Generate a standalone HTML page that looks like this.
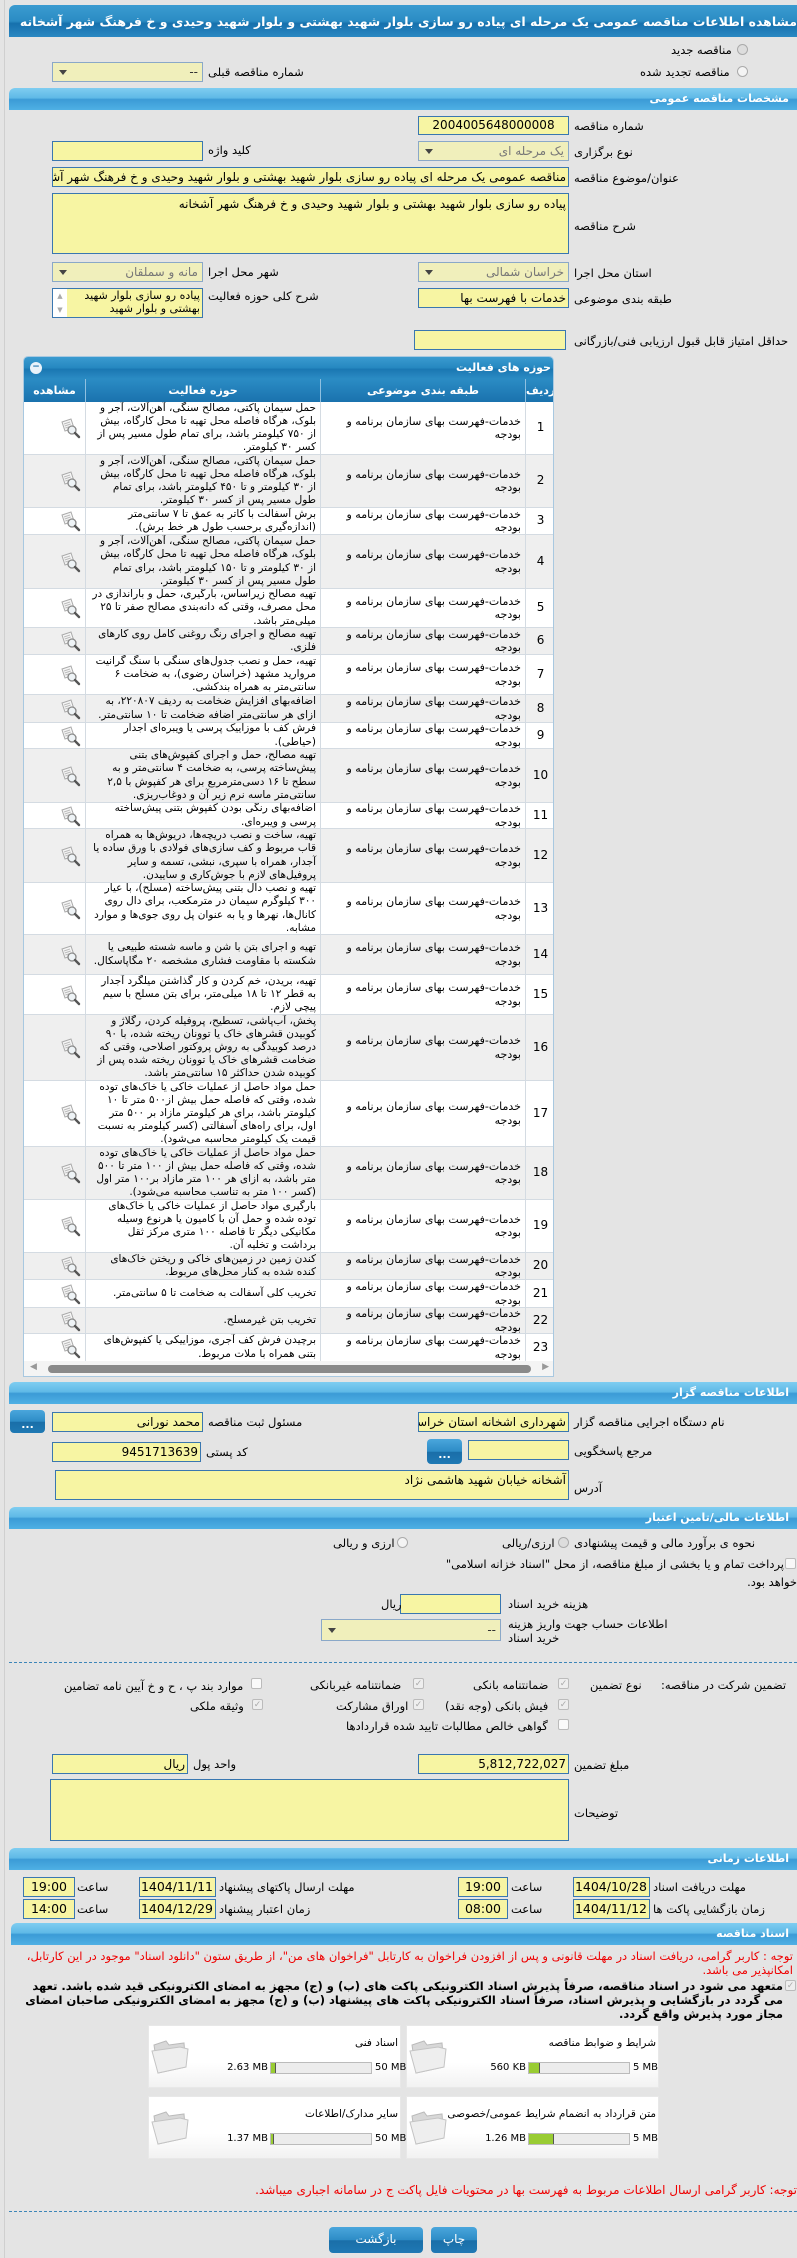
<!DOCTYPE html>
<html><head><meta charset="utf-8">
<style>
*{box-sizing:border-box}
body{margin:0;width:797px;height:2258px;background:#e4e4e4;font-family:"DejaVu Sans","Liberation Sans",sans-serif;font-size:11px;color:#000;position:relative;overflow:hidden}
.a{position:absolute;white-space:nowrap;direction:rtl}
.lbl{position:absolute;white-space:nowrap;direction:rtl;font-size:11.5px;line-height:14px}
.in{position:absolute;background:#f7f5a3;border:1px solid #3a77b0;direction:rtl;text-align:right;font-size:12px;padding:0 2px;overflow:hidden;white-space:nowrap}
.sel{position:absolute;background:#f0efbb;border:1px solid #8aa8c8;direction:rtl;text-align:right;font-size:12px;padding:0 4px;color:#777;overflow:hidden;white-space:nowrap}
.sel:after{content:"";position:absolute;left:6px;top:50%;margin-top:-2px;border-left:4px solid transparent;border-right:4px solid transparent;border-top:5px solid #444}
.sec{position:absolute;left:9px;width:788px;height:22px;border-radius:6px 0 0 0;background:linear-gradient(#7fcdf1 0%,#5fb9e7 45%,#3b9bd6 52%,#4fb0e4 100%);color:#fff;font-weight:bold;font-size:11px;direction:rtl;text-align:right;padding:4px 8px 0 0}
.btn{position:absolute;border-radius:4px;background:linear-gradient(#4aa6dc 0%,#2d8cc6 50%,#1a6ea8 52%,#1f79b4 100%);color:#fff;text-align:center;font-weight:bold;font-size:11px}
.rad{position:absolute;width:11px;height:11px;border-radius:50%;border:1px solid #aaa;background:#f4f4f4}
.chk{position:absolute;width:11px;height:11px;border:1px solid #bbb;background:#eee;border-radius:2px;color:#aaa;font-size:9px;line-height:10px;text-align:center}
.row{position:absolute;left:0;width:531px;border-bottom:1px solid #d4dbe2}
.cell{position:absolute;top:0;bottom:0;border-left:1px solid #d4dbe2;direction:rtl;text-align:right;display:flex;align-items:center;justify-content:flex-start;overflow:hidden;line-height:13.2px}
.hc{position:absolute;top:22px;height:23px;color:#fff;font-weight:bold;text-align:center;line-height:23px;border-left:1px solid #8fc0e0;font-size:11px}
.red{position:absolute;color:#e00;direction:rtl;text-align:right;font-size:11.5px;line-height:14px}
.pan{position:absolute;background:linear-gradient(#fff 60%,#f2f2f2);border:1px solid #e8e8e8}
.bar{position:absolute;height:12px;background:#ececec;border:1px solid #bbb}
.bar i{position:absolute;left:0;top:0;bottom:0;background:#9c3;border-right:1px solid #555}
</style></head><body>
<div style="position:absolute;left:4px;top:0;width:1px;height:2258px;background:#cfcfcf"></div>

<div style="position:absolute;left:9px;top:5px;width:788px;height:32px;border-radius:6px 0 0 0;background:linear-gradient(#3a9bd0 0%,#2b8cc4 50%,#1670ad 58%,#2a88c2 100%);overflow:hidden"><div style="position:absolute;right:0;top:9px;color:#fff;font-weight:bold;font-size:12.5px;direction:rtl;white-space:nowrap">مشاهده اطلاعات مناقصه عمومی یک مرحله ای پیاده رو سازی بلوار شهید بهشتی و بلوار شهید وحیدی و خ فرهنگ شهر آشخانه</div></div>

<div class="rad" style="left:737px;top:44px;background:#ddd"></div><div class="lbl" style="left:671px;top:43px">مناقصه جدید</div>
<div class="rad" style="left:737px;top:66px"></div><div class="lbl" style="left:640px;top:65px">مناقصه تجدید شده</div>
<div class="sel" style="left:52px;top:62px;width:151px;height:20px;color:#333;line-height:18px">--</div>
<div class="lbl" style="left:208px;top:65px">شماره مناقصه قبلی</div>

<div class="sec" style="top:88px">مشخصات مناقصه عمومی</div>
<div class="in" style="left:418px;top:116px;width:151px;height:19px;text-align:center;line-height:17px">2004005648000008</div>
<div class="lbl" style="left:574px;top:119px">شماره مناقصه</div>
<div class="sel" style="left:418px;top:141px;width:151px;height:20px;line-height:18px">یک مرحله ای</div>
<div class="lbl" style="left:574px;top:145px">نوع برگزاری</div>
<div class="in" style="left:52px;top:141px;width:151px;height:20px"></div>
<div class="lbl" style="left:208px;top:143px">کلید واژه</div>
<div class="in" style="left:52px;top:167px;width:517px;height:20px;line-height:18px">مناقصه عمومی یک مرحله ای پیاده رو سازی بلوار شهید بهشتی و بلوار شهید وحیدی و خ فرهنگ شهر آشخانه</div>
<div class="lbl" style="left:574px;top:171px">عنوان/موضوع مناقصه</div>
<div class="in" style="left:52px;top:193px;width:517px;height:61px;line-height:16px;padding-top:2px">پیاده رو سازی بلوار شهید بهشتی و بلوار شهید وحیدی و خ فرهنگ شهر آشخانه</div>
<div class="lbl" style="left:574px;top:219px">شرح مناقصه</div>

<div class="sel" style="left:418px;top:262px;width:151px;height:20px;line-height:18px">خراسان شمالی</div>
<div class="lbl" style="left:574px;top:266px">استان محل اجرا</div>
<div class="sel" style="left:52px;top:262px;width:151px;height:20px;line-height:18px">مانه و سملقان</div>
<div class="lbl" style="left:208px;top:265px">شهر محل اجرا</div>
<div class="in" style="left:418px;top:288px;width:151px;height:20px;line-height:18px">خدمات با فهرست بها</div>
<div class="lbl" style="left:574px;top:292px">طبقه بندی موضوعی</div>
<div class="in" style="left:52px;top:288px;width:151px;height:30px;line-height:13px;font-size:11px;padding-left:16px;white-space:normal">پیاده رو سازی بلوار شهید بهشتی و بلوار شهید<div style="position:absolute;left:0;top:0;width:14px;height:28px;background:#fff;color:#aaa;font-size:7px;text-align:center;line-height:14px">▲<br>▼</div></div>
<div class="lbl" style="left:208px;top:289px">شرح کلی حوزه فعالیت</div>
<div class="in" style="left:414px;top:330px;width:152px;height:20px"></div>
<div class="lbl" style="left:574px;top:334px">حداقل امتیاز قابل قبول ارزیابی فنی/بازرگانی</div>

<!-- table -->
<div id="tbl" style="position:absolute;left:23px;top:356px;width:531px;height:1021px;background:#fff;border:1px solid #a8c8e0;border-radius:5px 5px 0 0;overflow:hidden">
<div style="position:absolute;left:0;top:0;width:531px;height:22px;background:linear-gradient(#3a9bd0,#2587c0 50%,#1a77b2 55%,#2b8cc4);color:#fff;font-weight:bold;font-size:11px;direction:rtl;text-align:right;padding:4px 4px 0 0">حوزه های فعالیت<div style="position:absolute;left:6px;top:5px;width:12px;height:12px;border-radius:50%;background:#e8f2fa;color:#1a70aa;font-size:9px;line-height:11px;text-align:center">−</div></div>
<div style="position:absolute;left:0;top:22px;width:531px;height:23px;background:linear-gradient(#2b8cc4,#1a72ae)"></div>
<div class="hc" style="left:501px;width:30px;border-left:1px solid #8fc0e0">ردیف</div>
<div class="hc" style="left:296px;width:205px">طبقه بندی موضوعی</div>
<div class="hc" style="left:61px;width:235px">حوزه فعالیت</div>
<div class="hc" style="left:0;width:61px;border-left:none">مشاهده</div>
<div id="rows"></div>
<div style="position:absolute;left:0;top:1004px;width:531px;height:15px;background:#f4f4f4"><div style="position:absolute;left:24px;right:24px;top:4px;height:8px;border-radius:4px;background:#8a8a8a"></div><div class="a" style="left:6px;top:1px;color:#999;font-size:9px">◀</div><div class="a" style="right:6px;top:1px;color:#999;font-size:9px">▶</div></div>
</div>

<div class="sec" style="top:1382px">اطلاعات مناقصه گزار</div>
<div class="in" style="left:418px;top:1412px;width:151px;height:20px;line-height:18px">شهرداری اشخانه استان خراسان</div>
<div class="lbl" style="left:574px;top:1415px">نام دستگاه اجرایی مناقصه گزار</div>
<div class="in" style="left:52px;top:1412px;width:151px;height:20px;line-height:18px">محمد نورانی</div>
<div class="lbl" style="left:208px;top:1415px">مسئول ثبت مناقصه</div>
<div class="btn" style="left:10px;top:1410px;width:35px;height:23px;line-height:30px">...</div>
<div class="in" style="left:468px;top:1440px;width:101px;height:20px"></div>
<div class="btn" style="left:427px;top:1439px;width:35px;height:25px;line-height:32px">...</div>
<div class="lbl" style="left:574px;top:1444px">مرجع پاسخگویی</div>
<div class="in" style="left:52px;top:1442px;width:149px;height:20px;line-height:18px">9451713639</div>
<div class="lbl" style="left:206px;top:1445px">کد پستی</div>
<div class="in" style="left:55px;top:1470px;width:514px;height:30px;line-height:18px">آشخانه خیابان شهید هاشمی نژاد</div>
<div class="lbl" style="left:574px;top:1481px">آدرس</div>

<div class="sec" style="top:1507px">اطلاعات مالی/تامین اعتبار</div>
<div class="lbl" style="left:574px;top:1536px">نحوه ی برآورد مالی و قیمت پیشنهادی</div>
<div class="rad" style="left:558px;top:1537px;background:#ddd"></div><div class="lbl" style="left:502px;top:1536px">ارزی/ریالی</div>
<div class="rad" style="left:397px;top:1537px"></div><div class="lbl" style="left:333px;top:1536px">ارزی و ریالی</div>
<div class="chk" style="left:785px;top:1558px;background:#f8f8f8"></div>
<div class="lbl" style="right:13px;top:1557px">پرداخت تمام و یا بخشی از مبلغ مناقصه، از محل "اسناد خزانه اسلامی"</div>
<div class="lbl" style="right:0px;top:1575px">خواهد بود.</div>
<div class="in" style="left:400px;top:1594px;width:101px;height:20px"></div>
<div class="lbl" style="left:381px;top:1597px">ریال</div>
<div class="lbl" style="left:508px;top:1597px">هزینه خرید اسناد</div>
<div class="sel" style="left:321px;top:1619px;width:180px;height:22px;color:#333;line-height:20px">--</div>
<div class="lbl" style="left:508px;top:1617px">اطلاعات حساب جهت واریز هزینه</div>
<div class="lbl" style="left:508px;top:1631px">خرید اسناد</div>
<div style="position:absolute;left:9px;top:1662px;width:788px;border-top:1px dashed #3d86b8"></div>

<div class="lbl" style="left:661px;top:1678px">تضمین شرکت در مناقصه:</div>
<div class="lbl" style="left:590px;top:1678px">نوع تضمین</div>
<div class="chk" style="left:558px;top:1678px">✓</div><div class="lbl" style="left:473px;top:1678px">ضمانتنامه بانکی</div>
<div class="chk" style="left:413px;top:1678px">✓</div><div class="lbl" style="left:310px;top:1678px">ضمانتنامه غیربانکی</div>
<div class="chk" style="left:251px;top:1678px;background:#fafafa"></div><div class="lbl" style="left:64px;top:1679px">موارد بند پ ، ح و خ آیین نامه تضامین</div>
<div class="chk" style="left:558px;top:1699px">✓</div><div class="lbl" style="left:445px;top:1699px">فیش بانکی (وجه نقد)</div>
<div class="chk" style="left:413px;top:1699px">✓</div><div class="lbl" style="left:336px;top:1699px">اوراق مشارکت</div>
<div class="chk" style="left:252px;top:1699px">✓</div><div class="lbl" style="left:190px;top:1699px">وثیقه ملکی</div>
<div class="chk" style="left:558px;top:1719px;background:#fafafa"></div><div class="lbl" style="left:346px;top:1719px">گواهی خالص مطالبات تایید شده قراردادها</div>

<div class="in" style="left:418px;top:1754px;width:151px;height:20px;line-height:18px">5,812,722,027</div>
<div class="lbl" style="left:574px;top:1758px">مبلغ تضمین</div>
<div class="in" style="left:52px;top:1754px;width:136px;height:20px;line-height:18px">ریال</div>
<div class="lbl" style="left:193px;top:1757px">واحد پول</div>
<div class="in" style="left:50px;top:1779px;width:519px;height:62px"></div>
<div class="lbl" style="left:574px;top:1806px">توضیحات</div>

<div class="sec" style="top:1848px">اطلاعات زمانی</div>
<div class="lbl" style="left:653px;top:1880px">مهلت دریافت اسناد</div>
<div class="in" style="left:573px;top:1877px;width:77px;height:20px;line-height:18px;font-size:12.5px;text-align:center">1404/10/28</div>
<div class="lbl" style="left:511px;top:1880px">ساعت</div>
<div class="in" style="left:458px;top:1877px;width:50px;height:20px;line-height:18px;text-align:center;font-size:12.5px">19:00</div>
<div class="lbl" style="left:219px;top:1880px">مهلت ارسال پاکتهای پیشنهاد</div>
<div class="in" style="left:139px;top:1877px;width:77px;height:20px;line-height:18px;font-size:12.5px;text-align:center">1404/11/11</div>
<div class="lbl" style="left:77px;top:1880px">ساعت</div>
<div class="in" style="left:23px;top:1877px;width:52px;height:20px;line-height:18px;text-align:center;font-size:12.5px">19:00</div>
<div class="lbl" style="left:653px;top:1902px">زمان بازگشایی پاکت ها</div>
<div class="in" style="left:573px;top:1899px;width:77px;height:20px;line-height:18px;font-size:12.5px;text-align:center">1404/11/12</div>
<div class="lbl" style="left:511px;top:1902px">ساعت</div>
<div class="in" style="left:458px;top:1899px;width:50px;height:20px;line-height:18px;text-align:center;font-size:12.5px">08:00</div>
<div class="lbl" style="left:219px;top:1902px">زمان اعتبار پیشنهاد</div>
<div class="in" style="left:139px;top:1899px;width:77px;height:20px;line-height:18px;font-size:12.5px;text-align:center">1404/12/29</div>
<div class="lbl" style="left:77px;top:1902px">ساعت</div>
<div class="in" style="left:23px;top:1899px;width:52px;height:20px;line-height:18px;text-align:center;font-size:12.5px">14:00</div>

<div class="sec" style="top:1923px;left:11px;width:786px">اسناد مناقصه</div>
<div class="red" style="left:20px;right:4px;top:1949px">توجه : کاربر گرامی، دریافت اسناد در مهلت قانونی و پس از افزودن فراخوان به کارتابل "فراخوان های من"، از طریق ستون "دانلود اسناد" موجود در این کارتابل، امکانپذیر می باشد.</div>
<div class="chk" style="left:785px;top:1980px">✓</div>
<div class="a" style="left:10px;right:14px;top:1979px;white-space:normal;font-weight:bold;font-size:11.5px;line-height:14px;text-align:right">متعهد می شود در اسناد مناقصه، صرفاً پذیرش اسناد الکترونیکی پاکت های (ب) و (ج) مجهز به امضای الکترونیکی قید شده باشد. تعهد می گردد در بازگشایی و پذیرش اسناد، صرفاً اسناد الکترونیکی پاکت های پیشنهاد (ب) و (ج) مجهز به امضای الکترونیکی صاحبان امضای مجاز مورد پذیرش واقع گردد.</div>

<div id="panels"></div>

<div class="red" style="right:0;top:2183px;font-size:12px;white-space:nowrap">توجه: کاربر گرامی ارسال اطلاعات مربوط به فهرست بها در محتویات فایل پاکت ج در سامانه اجباری میباشد.</div>
<div style="position:absolute;left:9px;top:2211px;width:788px;border-top:1px dashed #3d86b8"></div>
<div class="btn" style="left:329px;top:2227px;width:94px;height:26px;line-height:24px;font-weight:normal;font-size:12px">بازگشت</div>
<div class="btn" style="left:431px;top:2227px;width:46px;height:26px;line-height:24px;font-weight:normal;font-size:12px">چاپ</div>

<script>
var rows=[
[53,"حمل سیمان پاکتی، مصالح سنگی، آهن‌آلات، آجر و بلوک، هرگاه فاصله محل تهیه تا محل کارگاه، بیش از ۷۵۰ کیلومتر باشد، برای تمام طول مسیر پس از کسر ۳۰ کیلومتر."],
[53,"حمل سیمان پاکتی، مصالح سنگی، آهن‌آلات، آجر و بلوک، هرگاه فاصله محل تهیه تا محل کارگاه، بیش از ۳۰ کیلومتر و تا ۴۵۰ کیلومتر باشد، برای تمام طول مسیر پس از کسر ۳۰ کیلومتر."],
[27,"برش آسفالت با کاتر به عمق تا ۷ سانتی‌متر (اندازه‌گیری برحسب طول هر خط برش)."],
[54,"حمل سیمان پاکتی، مصالح سنگی، آهن‌آلات، آجر و بلوک، هرگاه فاصله محل تهیه تا محل کارگاه، بیش از ۳۰ کیلومتر و تا ۱۵۰ کیلومتر باشد، برای تمام طول مسیر پس از کسر ۳۰ کیلومتر."],
[39,"تهیه مصالح زیراساس، بارگیری، حمل و باراندازی در محل مصرف، وقتی که دانه‌بندی مصالح صفر تا ۲۵ میلی‌متر باشد."],
[27,"تهیه مصالح و اجرای رنگ روغنی کامل روی کارهای فلزی."],
[40,"تهیه، حمل و نصب جدول‌های سنگی با سنگ گرانیت مروارید مشهد (خراسان رضوی)، به ضخامت ۶ سانتی‌متر به همراه بندکشی."],
[28,"اضافه‌بهای افزایش ضخامت به ردیف ۲۲۰۸۰۷، به ازای هر سانتی‌متر اضافه ضخامت تا ۱۰ سانتی‌متر."],
[26,"فرش کف با موزاییک پرسی یا ویبره‌ای آجدار (حیاطی)."],
[54,"تهیه مصالح، حمل و اجرای کفپوش‌های بتنی پیش‌ساخته پرسی، به ضخامت ۴ سانتی‌متر و به سطح تا ۱۶ دسی‌مترمربع برای هر کفپوش با ۲,۵ سانتی‌متر ماسه نرم زیر آن و دوغاب‌ریزی."],
[26,"اضافه‌بهای رنگی بودن کفپوش بتنی پیش‌ساخته پرسی و ویبره‌ای."],
[54,"تهیه، ساخت و نصب دریچه‌ها، دریوش‌ها به همراه قاب مربوط و کف سازی‌های فولادی با ورق ساده یا آجدار، همراه با سپری، نبشی، تسمه و سایر پروفیل‌های لازم با جوش‌کاری و ساییدن."],
[52,"تهیه و نصب دال بتنی پیش‌ساخته (مسلح)، با عیار ۳۰۰ کیلوگرم سیمان در مترمکعب، برای دال روی کانال‌ها، نهرها و یا به عنوان پل روی جوی‌ها و موارد مشابه."],
[40,"تهیه و اجرای بتن با شن و ماسه شسته طبیعی یا شکسته با مقاومت فشاری مشخصه ۲۰ مگاپاسکال."],
[40,"تهیه، بریدن، خم کردن و کار گذاشتن میلگرد آجدار به قطر ۱۲ تا ۱۸ میلی‌متر، برای بتن مسلح با سیم پیچی لازم."],
[66,"پخش، آب‌پاشی، تسطیح، پروفیله کردن، رگلاژ و کوبیدن قشرهای خاک یا توونان ریخته شده، با ۹۰ درصد کوبیدگی به روش پروکتور اصلاحی، وقتی که ضخامت قشرهای خاک یا توونان ریخته شده پس از کوبیده شدن حداکثر ۱۵ سانتی‌متر باشد."],
[66,"حمل مواد حاصل از عملیات خاکی یا خاک‌های توده شده، وقتی که فاصله حمل بیش از۵۰۰ متر تا ۱۰ کیلومتر باشد، برای هر کیلومتر مازاد بر ۵۰۰ متر اول، برای راه‌های آسفالتی (کسر کیلومتر به نسبت قیمت یک کیلومتر محاسبه می‌شود)."],
[53,"حمل مواد حاصل از عملیات خاکی یا خاک‌های توده شده، وقتی که فاصله حمل بیش از ۱۰۰ متر تا ۵۰۰ متر باشد، به ازای هر ۱۰۰ متر مازاد بر۱۰۰ متر اول (کسر ۱۰۰ متر به تناسب محاسبه می‌شود)."],
[53,"بارگیری مواد حاصل از عملیات خاکی یا خاک‌های توده شده و حمل آن با کامیون یا هرنوع وسیله مکانیکی دیگر تا فاصله ۱۰۰ متری مرکز ثقل برداشت و تخلیه آن."],
[27,"کندن زمین در زمین‌های خاکی و ریختن خاک‌های کنده شده به کنار محل‌های مربوط."],
[28,"تخریب کلی آسفالت به ضخامت تا ۵ سانتی‌متر."],
[26,"تخریب بتن غیرمسلح."],
[28,"برچیدن فرش کف آجری، موزاییکی یا کفپوش‌های بتنی همراه با ملات مربوط."]];
var icon='<svg width="22" height="22" viewBox="0 0 22 22"><path d="M3 5 L12 2 L15 11 L6 14 Z" fill="#f6f6f6" stroke="#aaa"/><path d="M5 7 L11 5 M5.7 9 L11.7 7 M6.4 11 L10 9.8" stroke="#bbb"/><circle cx="13" cy="13" r="4" fill="#eef3f6" stroke="#888" stroke-width="1.3"/><path d="M16 16 L20 20" stroke="#555" stroke-width="2.4" stroke-linecap="round"/></svg>';
var h='',y=45;
rows.forEach(function(r,i){
var bg=i%2?'#efefef':'#fff';
h+='<div class="row" style="top:'+y+'px;height:'+r[0]+'px;background:'+bg+'">'+
'<div class="cell" style="left:501px;width:30px;justify-content:center;font-size:12px">'+(i+1)+'</div>'+
'<div class="cell" style="left:296px;width:205px;padding:0 4px 0 22px;font-size:11px"><div>خدمات-فهرست بهای سازمان برنامه و بودجه</div></div>'+
'<div class="cell" style="left:61px;width:235px;padding:0 4px;font-size:10.5px"><div>'+r[1]+'</div></div>'+
'<div class="cell" style="left:0;width:61px;border-left:none;padding-right:4px">'+icon+'</div></div>';
y+=r[0];
});
document.getElementById('rows').innerHTML=h;
var folder='<svg width="42" height="38" viewBox="0 0 42 38"><path d="M4 8 L16 4 L19 8 L34 6 L36 30 L8 36 Z" fill="#d8d8d8" stroke="#bbb"/><path d="M2 14 L30 10 L38 12 L36 30 L8 36 Z" fill="#eee" stroke="#c4c4c4"/></svg>';
var P=[[406,2025,"شرایط و ضوابط مناقصه","5 MB","560 KB",11],[148,2025,"اسناد فنی","50 MB","2.63 MB",5],[406,2096,"متن قرارداد به انضمام شرایط عمومی/خصوصی","5 MB","1.26 MB",25],[148,2096,"سایر مدارک/اطلاعات","50 MB","1.37 MB",3]];
var s='';
P.forEach(function(p){var x=p[0],y=p[1];
s+='<div class="pan" style="left:'+x+'px;top:'+y+'px;width:253px;height:63px"></div>';
s+='<div class="a" style="left:'+(x+2)+'px;top:'+(y+12)+'px">'+folder+'</div>';
s+='<div class="a" style="right:'+(797-x-250)+'px;top:'+(y+12)+'px;font-size:10.5px">'+p[2]+'</div>';
s+='<div class="a" style="left:'+(x+227)+'px;top:'+(y+37)+'px;font-size:10px;direction:ltr">'+p[3]+'</div>';
s+='<div class="bar" style="left:'+(x+122)+'px;top:'+(y+37)+'px;width:102px"><i style="width:'+p[5]+'%"></i></div>';
s+='<div class="a" style="right:'+(797-x-120)+'px;top:'+(y+37)+'px;font-size:10px;direction:ltr">'+p[4]+'</div>';
});
document.getElementById('panels').innerHTML=s;
</script>
</body></html>
